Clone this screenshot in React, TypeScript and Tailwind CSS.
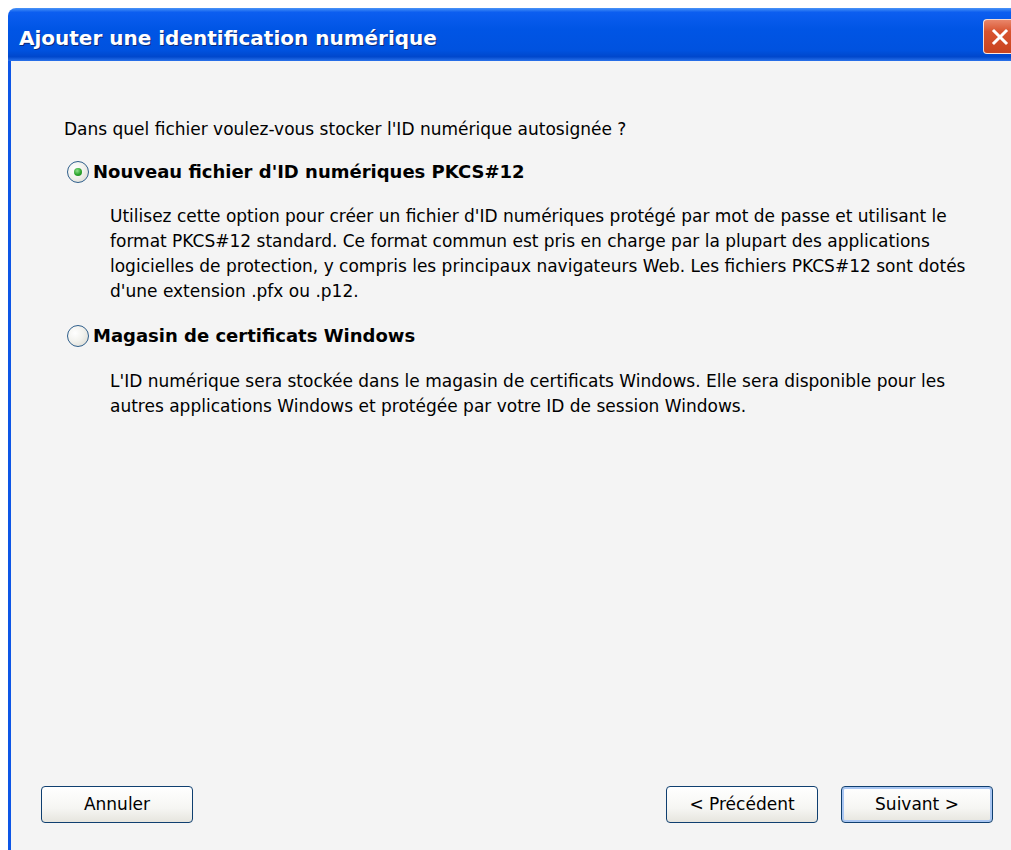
import React from 'react';

const uiFont = { fontFamily: '"DejaVu Sans", Verdana, sans-serif' };

const Radio = ({ checked }: { checked?: boolean }) => (
  <span className="relative flex h-[22px] w-[22px] shrink-0 items-center justify-center rounded-full border-[1.5px] border-[#2f5f8c] bg-[radial-gradient(circle_at_35%_35%,#ffffff_0%,#f2f2ee_45%,#d6d5cc_100%)]">
    {checked && (
      <span className="h-[8px] w-[8px] rounded-full bg-[radial-gradient(circle_at_40%_35%,#8fe08a_0%,#2ca52c_55%,#1a7d1c_100%)]" />
    )}
  </span>
);

const XpButton = ({ label, isDefault }: { label: string; isDefault?: boolean }) => (
  <button
    className={`flex h-[37px] w-[152px] items-center justify-center rounded-[4px] border border-[#0f3f70] bg-[linear-gradient(to_bottom,#ffffff_0%,#f6f6f3_60%,#e6e5de_100%)] text-[17px] leading-none text-black ${
      isDefault ? 'shadow-[inset_0_0_0_2px_#a9c6f2]' : ''
    }`}
    style={uiFont}
  >
    {label}
  </button>
);

const CloseButton = () => (
  <div className="flex h-[35px] w-[33px] items-center justify-center rounded-[4px] border border-white/80 bg-[linear-gradient(to_bottom,#e9866a_0%,#d8532f_35%,#c9441f_100%)]">
    <svg width="18" height="18" viewBox="0 0 18 18">
      <path d="M3 3 L15 15 M15 3 L3 15" stroke="#fff" strokeWidth="3" strokeLinecap="square" />
    </svg>
  </div>
);

export default function App() {
  return (
    <div className="h-[850px] w-[1011px] overflow-hidden bg-white pl-2 pt-2">
      <div className="flex h-[842px] w-[1012px] flex-col overflow-hidden rounded-tl-[8px] rounded-tr-[8px]">
        {/* title bar */}
        <div className="flex h-[53px] shrink-0 items-start bg-[linear-gradient(to_bottom,#4a94f7_0%,#0c5ef0_8%,#0055e5_40%,#0052df_80%,#0047cc_92%,#2a72ea_100%)] pl-[11px]">
          <span
            className="mt-[18px] text-[20px] font-bold leading-[24px] text-white [text-shadow:1px_1px_0_#0a2a7a]"
            style={uiFont}
          >
            Ajouter une identification numérique
          </span>
          <div className="ml-auto mr-[4px] mt-[11px]">
            <CloseButton />
          </div>
        </div>

        {/* body */}
        <div className="flex flex-1 flex-col border-l-[3px] border-[#0d56e6] bg-[#f4f4f4] text-[17px] text-black" style={uiFont}>
          <div className="pl-[53px] pt-[56px] leading-[25px]">
            Dans quel fichier voulez-vous stocker l'ID numérique autosignée ?
          </div>

          <div className="mt-[17px] flex h-[25px] items-center gap-[4px] pl-[56px]">
            <Radio checked />
            <span className="text-[18px] font-bold leading-[25px]">Nouveau fichier d'ID numériques PKCS#12</span>
          </div>

          <div className="mt-[20px] pl-[99px] leading-[25px]">
            <div>Utilisez cette option pour créer un fichier d'ID numériques protégé par mot de passe et utilisant le</div>
            <div>format PKCS#12 standard. Ce format commun est pris en charge par la plupart des applications</div>
            <div>logicielles de protection, y compris les principaux navigateurs Web. Les fichiers PKCS#12 sont dotés</div>
            <div>d'une extension .pfx ou .p12.</div>
          </div>

          <div className="mt-[19px] flex h-[25px] items-center gap-[4px] pl-[56px]">
            <Radio />
            <span className="text-[18px] font-bold leading-[25px]">Magasin de certificats Windows</span>
          </div>

          <div className="mt-[21px] pl-[99px] leading-[25px]">
            <div>L'ID numérique sera stockée dans le magasin de certificats Windows. Elle sera disponible pour les</div>
            <div>autres applications Windows et protégée par votre ID de session Windows.</div>
          </div>

          <div className="flex-1" />

          <div className="flex items-center pb-[27px] pl-[30px] pr-[27px]">
            <XpButton label="Annuler" />
            <div className="flex-1" />
            <XpButton label="< Précédent" />
            <div className="w-[23px]" />
            <XpButton label="Suivant >" isDefault />
          </div>
        </div>
      </div>
    </div>
  );
}
